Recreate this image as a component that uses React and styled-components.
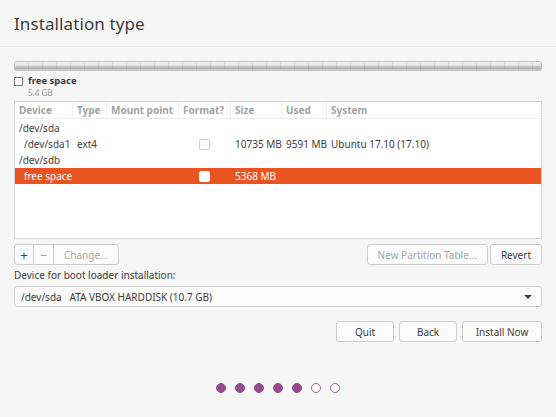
import React from "react"
import styled, { createGlobalStyle } from "styled-components"

const GlobalStyle = createGlobalStyle`
  html, body {
    margin: 0;
    padding: 0;
    background: #f6f6f6;
  }
  body {
    font-family: "Noto Sans", "Open Sans", sans-serif;
    font-size: 10px;
    color: #3c3c3c;
  }
`

const Window = styled.div`
  width: 556px;
  height: 417px;
  display: flex;
  flex-direction: column;
  overflow: hidden;
`

const Header = styled.div`
  height: 46px;
  border-bottom: 1px solid #e6e6e6;
  display: flex;
  align-items: center;
  padding: 0 14px;
`

const Title = styled.h1`
  margin: 0;
  font-size: 17px;
  font-weight: 400;
  color: #3c3c3c;
  letter-spacing: 0.1px;
`

const Content = styled.div`
  padding: 14px 14px 0;
  display: flex;
  flex-direction: column;
`

const PartitionBar = styled.div`
  height: 8px;
  border: 1px solid #c4c4c4;
  border-radius: 2px;
  background:
    repeating-linear-gradient(90deg, transparent 0, transparent 13px, rgba(0,0,0,0.08) 13px, rgba(0,0,0,0.08) 14px),
    linear-gradient(#f0f0f0, #e2e2e2 45%, #c2c2c2 55%, #b4b4b4 80%, #cfcfcf);
`

const Legend = styled.div`
  display: flex;
  gap: 5px;
  margin-top: 3px;
`

const LegendBox = styled.div`
  width: 7px;
  height: 7px;
  margin-top: 3px;
  border: 1px solid #7a7a7a;
  background: #fff;
`

const LegendText = styled.div`
  display: flex;
  flex-direction: column;
`

const LegendName = styled.div`
  font-weight: 700;
  font-size: 9.5px;
  line-height: 13px;
  height: 13px;
`

const LegendSize = styled.div`
  font-size: 8px;
  color: #999;
  line-height: 11px;
  height: 11px;
`

const Table = styled.div`
  margin-top: 3px;
  height: 136px;
  border: 1px solid #d4d4d4;
  background: #fff;
  display: flex;
  flex-direction: column;
`

const cols = "58px 34px 72px 52px 51px 45px 1fr"

const HeadRow = styled.div`
  display: grid;
  grid-template-columns: ${cols};
  height: 16px;
  border-bottom: 1px solid #ececec;
  margin-bottom: 1px;
`

const HeadCell = styled.div`
  padding-left: 4px;
  font-weight: 700;
  color: #a2a2a2;
  line-height: 16px;
  border-right: ${p => (p.$last ? "none" : "1px solid #efefef")};
  white-space: nowrap;
`

const Row = styled.div`
  display: grid;
  grid-template-columns: ${cols};
  height: 16px;
  line-height: 16px;
  background: ${p => (p.$selected ? "#e95420" : "transparent")};
  color: ${p => (p.$selected ? "#fff" : "#3c3c3c")};
`

const Cell = styled.div`
  padding-left: ${p => p.$indent || 4}px;
  white-space: nowrap;
  display: flex;
  align-items: center;
`

const Check = styled.div`
  width: 9px;
  height: 9px;
  border: 1px solid ${p => (p.$selected ? "#fff" : "#cfcfcf")};
  border-radius: 2px;
  background: ${p => (p.$selected ? "#fff" : "#fafafa")};
  margin-left: 16px;
`

const ToolRow = styled.div`
  display: flex;
  justify-content: space-between;
  margin-top: 5px;
`

const Group = styled.div`
  display: flex;
`

const Btn = styled.button`
  height: 21px;
  padding: 0 ${p => p.$pad ?? 10}px;
  min-width: ${p => p.$w || 0}px;
  border: 1px solid #cdcdcd;
  border-radius: ${p => p.$radius || "3px"};
  margin-left: ${p => p.$ml || 0}px;
  background: #fbfbfb;
  font-family: inherit;
  font-size: ${p => p.$big ? 13 : 10}px;
  color: ${p => (p.$disabled ? "#a8a8a8" : "#3c3c3c")};
  display: flex;
  align-items: center;
  justify-content: center;
`

const Label = styled.div`
  margin-top: 3px;
  line-height: 14px;
`

const Combo = styled.div`
  margin-top: 4px;
  height: 19px;
  border: 1px solid #cdcdcd;
  border-radius: 3px;
  background: #fbfbfb;
  display: flex;
  align-items: center;
  padding: 0 9px 0 6px;
  justify-content: space-between;
`

const ComboText = styled.span`
  white-space: pre;
`

const Arrow = styled.span`
  width: 0;
  height: 0;
  border-left: 4px solid transparent;
  border-right: 4px solid transparent;
  border-top: 4px solid #3c3c3c;
`

const Footer = styled.div`
  display: flex;
  justify-content: flex-end;
  gap: 5px;
  margin-top: 14px;
`

const Dots = styled.div`
  display: flex;
  justify-content: center;
  gap: 9px;
  margin-top: 41px;
  padding-right: 1px;
`

const Dot = styled.div`
  width: 8px;
  height: 8px;
  border-radius: 50%;
  border: 1px solid #924d8b;
  background: ${p => (p.$on ? "#924d8b" : "#fff")};
  opacity: ${p => (p.$on ? 1 : 0.85)};
`

const rows = [
  { device: "/dev/sda" },
  { device: "/dev/sda1", indent: 9, type: "ext4", check: true, size: "10735 MB", used: "9591 MB", system: "Ubuntu 17.10 (17.10)" },
  { device: "/dev/sdb" },
  { device: "free space", indent: 9, check: true, size: "5368 MB", selected: true },
]

export default function App() {
  return (
    <Window>
      <GlobalStyle />
      <Header>
        <Title>Installation type</Title>
      </Header>
      <Content>
        <PartitionBar />
        <Legend>
          <LegendBox />
          <LegendText>
            <LegendName>free space</LegendName>
            <LegendSize>5.4 GB</LegendSize>
          </LegendText>
        </Legend>
        <Table>
          <HeadRow>
            <HeadCell>Device</HeadCell>
            <HeadCell>Type</HeadCell>
            <HeadCell>Mount point</HeadCell>
            <HeadCell>Format?</HeadCell>
            <HeadCell>Size</HeadCell>
            <HeadCell>Used</HeadCell>
            <HeadCell $last>System</HeadCell>
          </HeadRow>
          {rows.map((r) => (
            <Row key={r.device} $selected={r.selected}>
              <Cell $indent={r.indent}>{r.device}</Cell>
              <Cell>{r.type}</Cell>
              <Cell></Cell>
              <Cell>{r.check && <Check $selected={r.selected} />}</Cell>
              <Cell>{r.size}</Cell>
              <Cell>{r.used}</Cell>
              <Cell>{r.system}</Cell>
            </Row>
          ))}
        </Table>
        <ToolRow>
          <Group>
            <Btn $pad={0} $w={20} $big $radius="3px 0 0 3px">+</Btn>
            <Btn $pad={0} $w={21} $big $radius="0" $ml={-1} $disabled>−</Btn>
            <Btn $w={66} $radius="0 3px 3px 0" $ml={-1} $disabled>Change...</Btn>
          </Group>
          <Group>
            <Btn $w={120} $disabled>New Partition Table...</Btn>
            <Btn $w={52} $ml={2}>Revert</Btn>
          </Group>
        </ToolRow>
        <Label>Device for boot loader installation:</Label>
        <Combo>
          <ComboText>/dev/sda   ATA VBOX HARDDISK (10.7 GB)</ComboText>
          <Arrow />
        </Combo>
        <Footer>
          <Btn $w={58}>Quit</Btn>
          <Btn $w={58}>Back</Btn>
          <Btn $w={80}>Install Now</Btn>
        </Footer>
        <Dots>
          {[1, 1, 1, 1, 1, 0, 0].map((on, i) => (
            <Dot key={i} $on={!!on} />
          ))}
        </Dots>
      </Content>
    </Window>
  )
}
